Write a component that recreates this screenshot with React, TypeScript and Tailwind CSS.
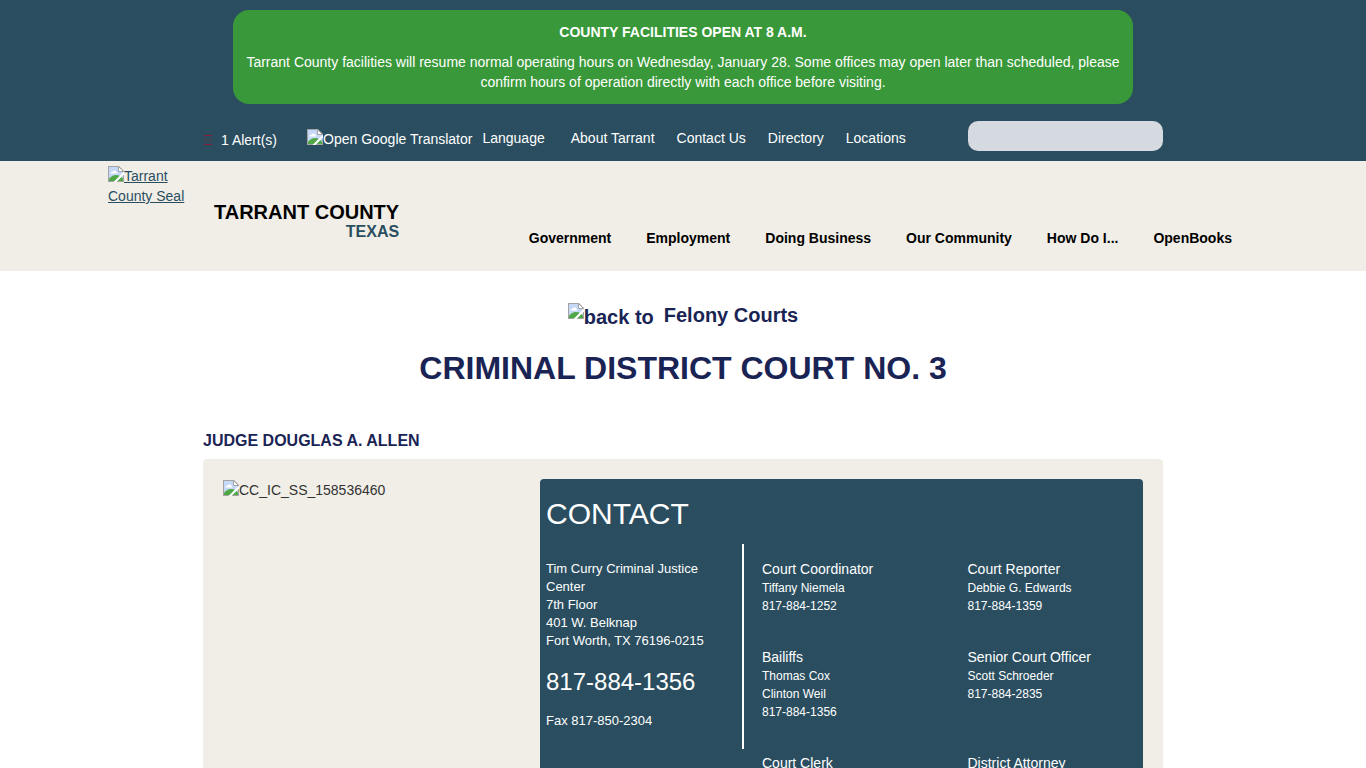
import { Fragment } from 'react';

interface Role {
    title: string;
    lines: string[];
}

const topLinks = ['About Tarrant', 'Contact Us', 'Directory', 'Locations'];

const navItems = ['Government', 'Employment', 'Doing Business', 'Our Community', 'How Do I...', 'OpenBooks'];

const staff: Role[][] = [
    [
        { title: 'Court Coordinator', lines: ['Tiffany Niemela', '817-884-1252'] },
        { title: 'Court Reporter', lines: ['Debbie G. Edwards', '817-884-1359'] },
    ],
    [
        { title: 'Bailiffs', lines: ['Thomas Cox', 'Clinton Weil', '817-884-1356'] },
        { title: 'Senior Court Officer', lines: ['Scott Schroeder', '817-884-2835'] },
    ],
    [
        { title: 'Court Clerk', lines: [] },
        { title: 'District Attorney', lines: [] },
    ],
];

// Placeholder shown in front of the alt text of a missing image
const MissingImage = () => (
    <svg className="inline-block align-top w-4 h-4 shrink-0" viewBox="0 0 16 16" aria-hidden="true">
        <path d="M0 0H11L16 5V16H0Z" fill="#a3a3a3" />
        <path d="M1 1H10.5L15 5.5V15H1Z" fill="#c5d8f7" />
        <path d="M2.500 7.500C2.500 6 4 5.500 5 5.500C5.500 4 8 4 8.500 6C9.500 6 9.500 7.500 8.500 7.500Z" fill="#fff" />
        <path d="M1 15V13C3 10.500 5.500 9 8 9C11 9 13.500 10.500 15 13V15Z" fill="#4fa845" />
        <path d="M16 5.500V8.500L8.500 16H5.500Z" fill="#fff" />
        <path d="M10.5 0.5V5.5H15.5Z" fill="#fff" stroke="#a3a3a3" />
    </svg>
);

// Small red box glyph next to the alert count
const AlertGlyph = () => (
    <svg className="w-[10px] h-[14px]" viewBox="0 0 10 14" aria-hidden="true">
        <path d="M1 2.5H9M1 11.5H9" stroke="#7f2038" />
        <path d="M1 7.5H9" stroke="#553a4c" />
        <path d="M1.5 3V11M8.5 3V11" stroke="#553a4c" strokeOpacity="0.4" />
    </svg>
);

const Alert = () => (
    <section className="max-w-[900px] mx-auto px-2 py-3 rounded-2xl bg-[#399839] text-center">
        <h2 className="font-bold">COUNTY FACILITIES OPEN AT 8 A.M.</h2>
        <p className="mt-[10px]">
            Tarrant County facilities will resume normal operating hours on Wednesday, January 28. Some offices may
            open later than scheduled, please confirm hours of operation directly with each office before visiting.
        </p>
    </section>
);

const TopBar = () => (
    <div className="bg-[#2a4e5f] text-white py-[10px]">
        <Alert />
        <div className="max-w-[960px] mx-auto mt-[17px] h-[30px] flex items-center">
            <a href="#" className="flex items-center gap-2 pt-2">
                <AlertGlyph />
                1 Alert(s)
            </a>
            <a href="#" className="ml-[30px] pt-1 flex items-center gap-[10px]">
                <span className="flex items-start pt-px">
                    <MissingImage />
                    Open Google Translator
                </span>
                Language
            </a>
            <nav className="ml-[26px] pt-1 flex gap-[22px]">
                {topLinks.map((link) => (
                    <a key={link} href="#">{link}</a>
                ))}
            </nav>
            <input
                type="search"
                aria-label="Search"
                className="ml-auto w-[195px] h-[30px] px-3 rounded-[10px] bg-[#d4dadf] text-gray-800 outline-none"
            />
        </div>
    </div>
);

const Header = () => (
    <header className="bg-[#f1eee7]">
        <div className="max-w-[1150px] h-[110px] mx-auto flex">
            <a href="#" className="w-20 pt-[5px] text-[#2a4e5f] underline">
                <MissingImage />Tarrant County Seal
            </a>
            <a href="#" className="ml-[26px] pt-[41px] text-right font-bold">
                <span className="block text-xl leading-5 text-black">TARRANT COUNTY</span>
                <span className="block text-base leading-5 text-[#2a4e5f]">TEXAS</span>
            </a>
            <nav className="ml-auto pt-[67px] pr-[26px] flex gap-[35px] font-bold text-black">
                {navItems.map((item) => (
                    <a key={item} href="#">{item}</a>
                ))}
            </nav>
        </div>
    </header>
);

const StaffEntry = ({ title, lines }: Role) => (
    <div>
        <h3 className="text-sm leading-5">{title}</h3>
        {lines.map((line) => (
            <p key={line} className="text-xs leading-[18px]">{line}</p>
        ))}
    </div>
);

const ContactPanel = () => (
    <section className="flex-1 rounded bg-[#2a4e5f] text-white px-[6px] pt-4 pb-8">
        <h2 className="text-3xl leading-[38px]">CONTACT</h2>
        <div className="mt-[11px] flex items-start">
            <address className="w-[198px] h-[205px] pt-4 pr-6 border-r-2 border-white not-italic text-[13px] leading-[18px]">
                {['Tim Curry Criminal Justice Center', '7th Floor', '401 W. Belknap', 'Fort Worth, TX 76196-0215'].map((line) => (
                    <Fragment key={line}>
                        {line}
                        <br />
                    </Fragment>
                ))}
                <a href="tel:817-884-1356" className="block mt-4 text-2xl">817-884-1356</a>
                <p className="mt-[14px]">Fax 817-850-2304</p>
            </address>
            <div className="flex-1 pl-[18px] pt-[15px] flex flex-col gap-8">
                {staff.map((row) => (
                    <div key={row[0].title} className="grid grid-cols-2 gap-x-9">
                        {row.map((role) => (
                            <StaffEntry key={role.title} {...role} />
                        ))}
                    </div>
                ))}
            </div>
        </div>
    </section>
);

export default function App() {
    return (
        <div className="min-h-screen bg-white font-['Liberation_Sans',Arial,sans-serif] text-sm leading-5">
            <TopBar />
            <Header />
            <main className="max-w-[960px] mx-auto pt-8 text-[#1a2454]">
                <a href="#" className="flex justify-center gap-[10px] text-xl leading-6 font-bold">
                    <span className="flex">
                        <MissingImage />
                        <span className="pt-[2px]">back to</span>
                    </span>
                    Felony Courts
                </a>
                <h1 className="mt-[19px] text-center text-[32px] leading-10 font-bold">CRIMINAL DISTRICT COURT NO. 3</h1>
                <h2 className="mt-[43px] text-base leading-5 font-bold">JUDGE DOUGLAS A. ALLEN</h2>
                <div className="mt-2 p-5 flex rounded bg-[#f1eee7]">
                    <div className="w-[317px] pt-px flex text-[#333]">
                        <MissingImage />
                        CC_IC_SS_158536460
                    </div>
                    <ContactPanel />
                </div>
            </main>
        </div>
    );
}
